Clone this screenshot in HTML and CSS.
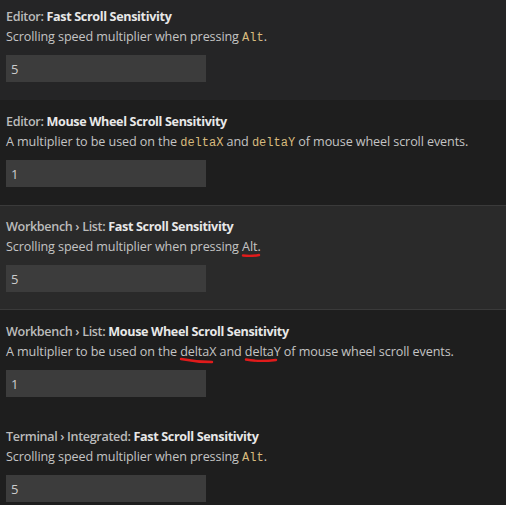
FILE: index.html
```html
<!DOCTYPE html>
<html lang="en">
<head>
    <meta charset="UTF-8">
    <title>Settings - Scroll Sensitivity</title>
    <link rel="stylesheet" href="styles.css">
</head>
<body>
    <div class="settings">
        <div class="setting first">
            <div class="title"><span class="cat">Editor: </span>Fast Scroll Sensitivity</div>
            <div class="desc">Scrolling speed multiplier when pressing <code>Alt</code>.</div>
            <input class="num" type="text" value="5">
        </div>

        <div class="setting">
            <div class="title"><span class="cat">Editor: </span>Mouse Wheel Scroll Sensitivity</div>
            <div class="desc">A multiplier to be used on the <code>deltaX</code> and <code>deltaY</code> of mouse wheel scroll events.</div>
            <input class="num" type="text" value="1">
        </div>

        <div class="setting hover">
            <div class="title"><span class="cat">Workbench › List: </span>Fast Scroll Sensitivity</div>
            <div class="desc">Scrolling speed multiplier when pressing <span class="mark">Alt<svg class="scribble" width="18" height="6" viewBox="0 0 18 6"><path d="M1 3.5 Q9 4.5 17 3" /></svg></span>.</div>
            <input class="num" type="text" value="5">
        </div>

        <div class="setting">
            <div class="title"><span class="cat">Workbench › List: </span>Mouse Wheel Scroll Sensitivity</div>
            <div class="desc">A multiplier to be used on the <span class="mark">deltaX<svg class="scribble" width="34" height="7" viewBox="0 0 34 7"><path d="M1 2 Q16 5 32 5" /></svg></span> and <span class="mark">deltaY<svg class="scribble" width="32" height="7" viewBox="0 0 32 7"><path d="M1 2.5 Q14 5 31 3" /></svg></span> of mouse wheel scroll events.</div>
            <input class="num" type="text" value="1">
        </div>

        <div class="setting">
            <div class="title"><span class="cat">Terminal › Integrated: </span>Fast Scroll Sensitivity</div>
            <div class="desc">Scrolling speed multiplier when pressing <code>Alt</code>.</div>
            <input class="num" type="text" value="5">
        </div>
    </div>
</body>
</html>
```

FILE: styles.css
```css
body {
    margin: 0;
    background: #1e1e1e;
    font-family: "Open Sans", "Noto Sans", sans-serif;
    font-size: 12.6px;
    color: #cccccc;
    overflow: hidden;
}
.settings {
    display: flex;
    flex-direction: column;
    margin-top: -5px;
}
.setting {
    padding: 13px 6px 18px;
    display: flex;
    flex-direction: column;
    align-items: flex-start;
}
.setting.first {
    background: #252526;
}
.setting.hover {
    background: #2a2a2a;
    border-top: 1px solid #3a3a3a;
    border-bottom: 1px solid #3a3a3a;
    padding-top: 12px;
    padding-bottom: 17px;
}
.title {
    line-height: 18px;
    font-weight: 700;
    color: #e8e8e8;
    letter-spacing: -0.35px;
}
.title .cat {
    color: #bbbbbb;
    font-weight: 600;
}
.desc {
    margin-top: 2px;
    line-height: 18px;
    color: #c4c4c4;
    letter-spacing: -0.1px;
}
code {
    font-family: "Liberation Mono", "DejaVu Sans Mono", monospace;
    font-size: 12px;
    line-height: 1;
    color: #d7ba7d;
    letter-spacing: 0;
}
.mark {
    position: relative;
}
.scribble {
    position: absolute;
    left: 0;
    top: 14px;
    overflow: visible;
}
.scribble path {
    fill: none;
    stroke: #e01b1b;
    stroke-width: 2.4;
    stroke-linecap: round;
}
.num {
    margin-top: 9px;
    width: 200px;
    height: 27px;
    box-sizing: border-box;
    border: none;
    outline: none;
    background: #3c3c3c;
    color: #cccccc;
    font-family: "Open Sans", "Noto Sans", sans-serif;
    font-size: 13px;
    padding: 0 5px;
}
```
